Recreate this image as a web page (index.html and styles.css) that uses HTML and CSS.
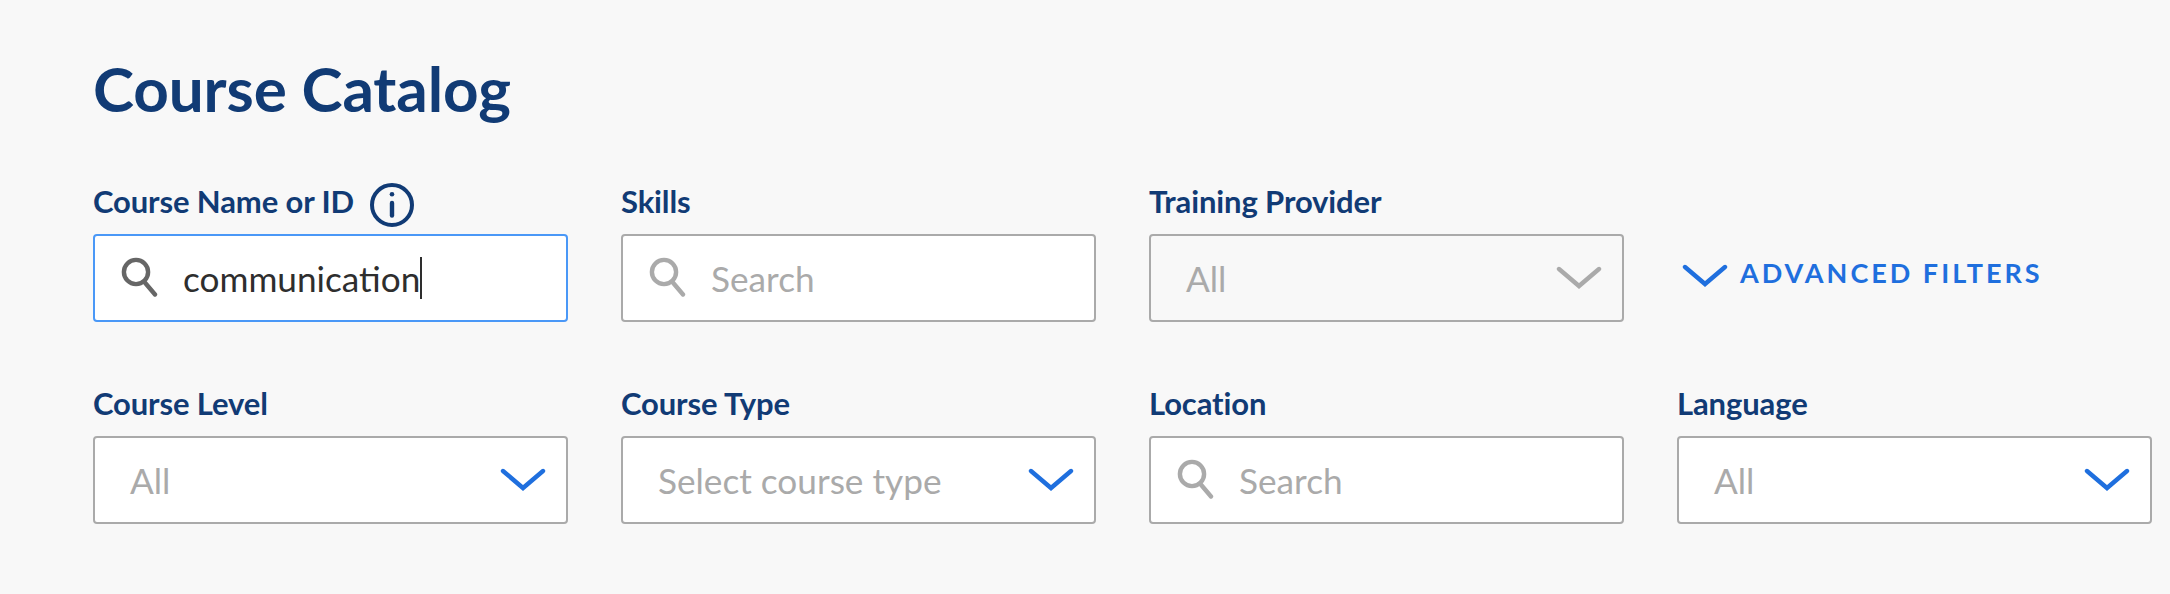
FILE: index.html
```
<!DOCTYPE html>
<html lang="en">
<head>
    <meta charset="UTF-8">
    <meta name="viewport" content="width=device-width, initial-scale=1.0">
    <title>Course Catalog</title>
    <link rel="stylesheet" href="styles.css">
</head>
<body>
    <!-- shared icons -->
    <svg class="icon-defs" width="0" height="0">
        <symbol id="icon-search" viewBox="0 0 38 42">
            <circle cx="16" cy="16" r="12.1" fill="none" stroke="currentColor" stroke-width="4.4"/>
            <path d="M24 25.5L35 38.5" fill="none" stroke="currentColor" stroke-width="4.4" stroke-linecap="round"/>
        </symbol>
        <symbol id="icon-chevron" viewBox="0 0 46 24">
            <path d="M3 3L23 20L43 3" fill="none" stroke="currentColor" stroke-width="4.4" stroke-linecap="round"/>
        </symbol>
    </svg>

    <main class="catalog">
        <h1>Course Catalog</h1>

        <div class="filters">
            <div class="field">
                <div class="field-label">
                    <span>Course Name or ID</span>
                    <svg class="icon-info" viewBox="0 0 46 46">
                        <circle cx="23" cy="23" r="20" fill="none" stroke="currentColor" stroke-width="4"/>
                        <circle cx="23" cy="12.2" r="2.3" fill="currentColor"/>
                        <path d="M23 21V33.5" stroke="currentColor" stroke-width="4.4" stroke-linecap="round"/>
                    </svg>
                </div>
                <div class="control search focused">
                    <svg class="icon-search"><use href="#icon-search"/></svg>
                    <span class="value">communication</span><span class="caret"></span>
                </div>
            </div>

            <div class="field">
                <div class="field-label">Skills</div>
                <div class="control search">
                    <svg class="icon-search"><use href="#icon-search"/></svg>
                    <span class="value">Search</span>
                </div>
            </div>

            <div class="field">
                <div class="field-label">Training Provider</div>
                <div class="control select disabled">
                    <span class="value">All</span>
                    <svg class="icon-chevron"><use href="#icon-chevron"/></svg>
                </div>
            </div>

            <a class="advanced">
                <svg class="icon-chevron"><use href="#icon-chevron"/></svg>
                <span>ADVANCED FILTERS</span>
            </a>

            <div class="field">
                <div class="field-label">Course Level</div>
                <div class="control select">
                    <span class="value">All</span>
                    <svg class="icon-chevron"><use href="#icon-chevron"/></svg>
                </div>
            </div>

            <div class="field">
                <div class="field-label">Course Type</div>
                <div class="control select">
                    <span class="value">Select course type</span>
                    <svg class="icon-chevron"><use href="#icon-chevron"/></svg>
                </div>
            </div>

            <div class="field">
                <div class="field-label">Location</div>
                <div class="control search">
                    <svg class="icon-search"><use href="#icon-search"/></svg>
                    <span class="value">Search</span>
                </div>
            </div>

            <div class="field">
                <div class="field-label">Language</div>
                <div class="control select">
                    <span class="value">All</span>
                    <svg class="icon-chevron"><use href="#icon-chevron"/></svg>
                </div>
            </div>
        </div>
    </main>
</body>
</html>
```
FILE: styles.css
```
* {
    box-sizing: border-box;
}
body {
    margin: 0;
    background: #f8f8f8;
    font-family: Lato, sans-serif;
    color: #113b75;
}
svg {
    display: block;
    flex: none;
}
.icon-defs {
    display: none;
}
.catalog {
    padding: 50px 0 0 93px;
}
h1 {
    margin: 0 0 55px;
    font-size: 62px;
    line-height: 76px;
    font-weight: 700;
    letter-spacing: -0.12px;
}
.filters {
    display: grid;
    grid-template-columns: repeat(4, 475px);
    column-gap: 53px;
    row-gap: 61px;
}
.field-label {
    display: flex;
    height: 40px;
    margin-bottom: 13px;
    font-size: 31px;
    line-height: 40px;
    font-weight: 700;
    letter-spacing: -0.12px;
    white-space: nowrap;
}
.icon-info {
    width: 46px;
    height: 46px;
    margin: 1px 0 0 15px;
}
.control {
    display: flex;
    align-items: flex-start;
    height: 88px;
    border: 2px solid #aaa;
    border-radius: 4px;
    background: #fff;
    color: #aaa;
    font-size: 35.2px;
    line-height: 44px;
    white-space: nowrap;
}
.control .value {
    margin-top: 20px;
}
.control.search {
    padding-left: 25px;
}
.icon-search {
    width: 38px;
    height: 42px;
    margin: 20px 25px 0 0;
}
.control.select {
    justify-content: space-between;
    padding: 0 20px 0 35px;
}
.icon-chevron {
    width: 46px;
    height: 24px;
}
.select .icon-chevron {
    margin-top: 30px;
    color: #1f6fde;
}
.control.disabled {
    background: #f8f8f8;
}
.control.disabled .icon-chevron {
    color: #aaa;
}
.control.focused {
    border-color: #4a98f7;
    color: #2e2e2e;
}
.focused .icon-search {
    color: #666;
}
.caret {
    width: 2px;
    height: 42px;
    margin-top: 21px;
    background: #2e2e2e;
}
.advanced {
    display: flex;
    align-items: flex-start;
    gap: 12px;
    padding: 83px 0 0 5px;
    color: #1f6fde;
    font-size: 27px;
    line-height: 32px;
    font-weight: 700;
    letter-spacing: 3px;
    white-space: nowrap;
}
.advanced span {
    margin-top: -7px;
}
```
